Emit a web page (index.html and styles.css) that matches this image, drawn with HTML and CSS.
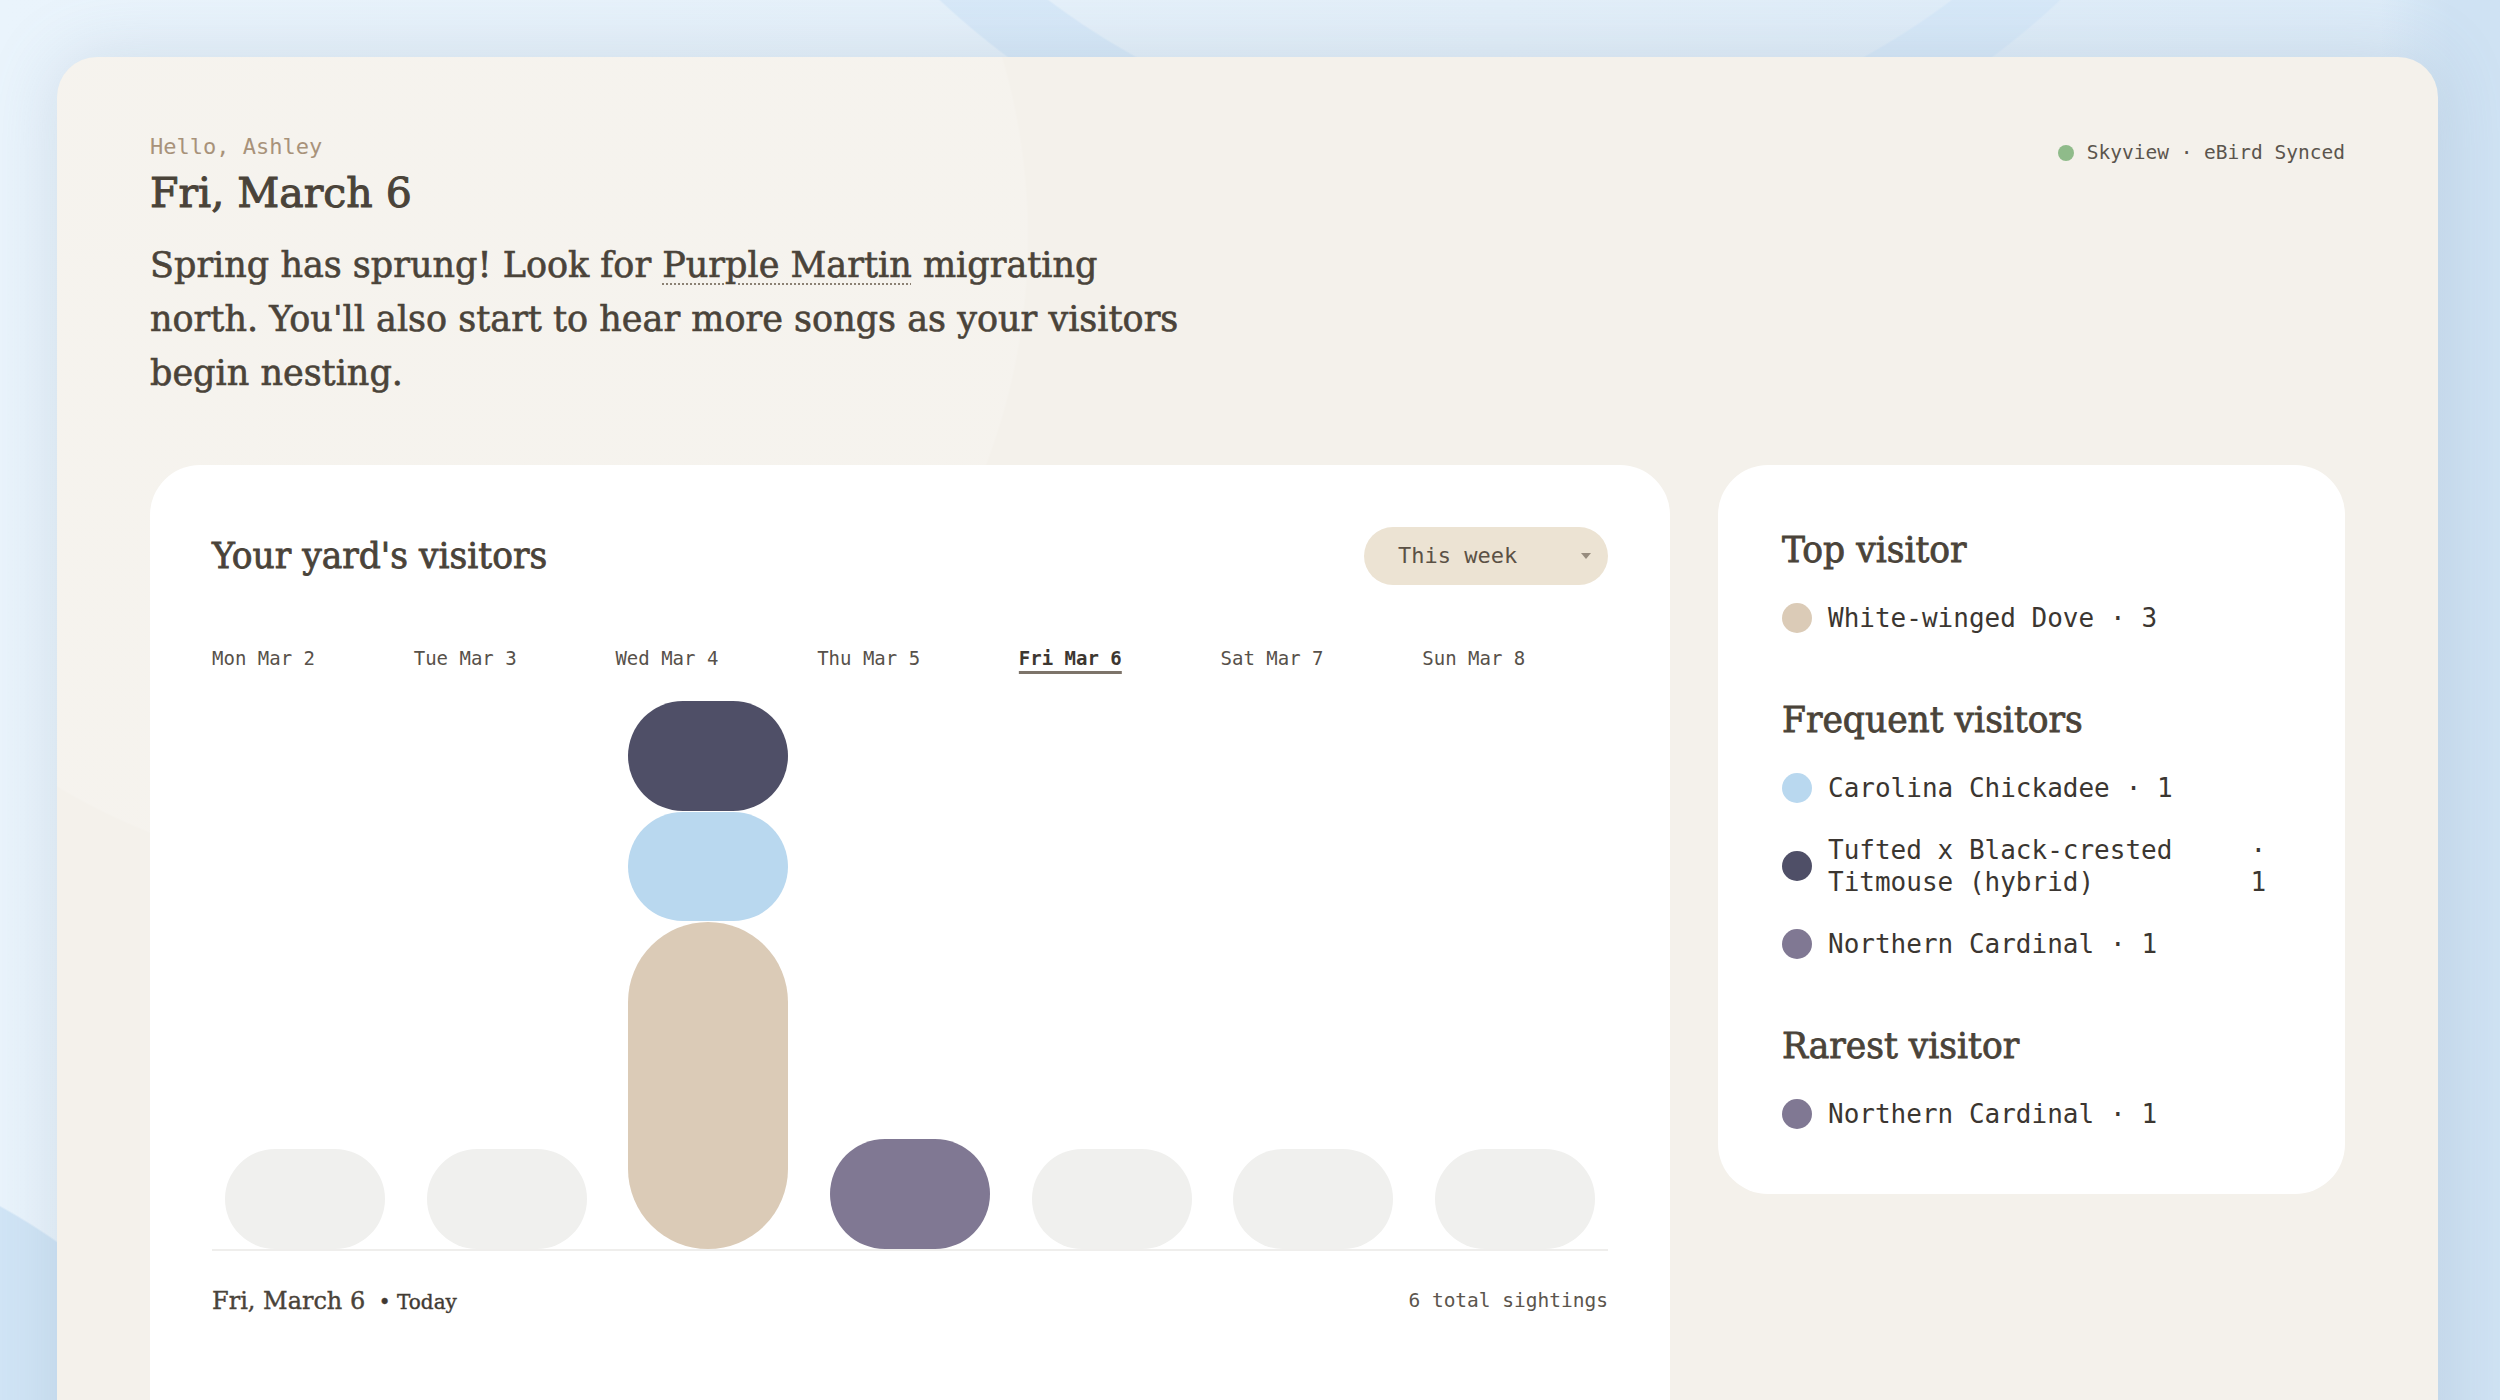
FILE: index.html
```html
<!DOCTYPE html>
<html lang="en">
<head>
<meta charset="utf-8">
<title>Yard visitors</title>
<link rel="stylesheet" href="styles.css">
</head>
<body>
<div class="page">
  <main class="panel">
    <header class="intro">
      <div class="intro-text">
        <p class="hello">Hello, Ashley</p>
        <h1 class="today">Fri, March 6</h1>
        <p class="lede">Spring has sprung! Look for <span class="bird-link">Purple Martin</span> migrating north. You'll also start to hear more songs as your visitors begin nesting.</p>
      </div>
      <div class="sync"><span class="sync-dot"></span>Skyview · eBird Synced</div>
    </header>

    <div class="cards">
      <section class="card chart-card">
        <div class="chart-head">
          <h2 class="card-title">Your yard's visitors</h2>
          <button class="range" type="button">
            <span>This week</span>
            <svg class="caret" width="10" height="6" viewBox="0 0 10 6" aria-hidden="true"><path d="M0 0h10L5 6z" fill="currentColor"/></svg>
          </button>
        </div>

        <div class="day-labels">
          <span class="day">Mon Mar 2</span>
          <span class="day">Tue Mar 3</span>
          <span class="day">Wed Mar 4</span>
          <span class="day">Thu Mar 5</span>
          <span class="day is-today">Fri Mar 6</span>
          <span class="day">Sat Mar 7</span>
          <span class="day">Sun Mar 8</span>
        </div>

        <div class="bars">
          <div class="stack"><div class="seg seg-empty"></div></div>
          <div class="stack"><div class="seg seg-empty"></div></div>
          <div class="stack">
            <div class="seg seg-titmouse" style="height:110px"></div>
            <div class="seg seg-chickadee" style="height:109px"></div>
            <div class="seg seg-dove" style="height:327px"></div>
          </div>
          <div class="stack"><div class="seg seg-cardinal" style="height:110px"></div></div>
          <div class="stack"><div class="seg seg-empty"></div></div>
          <div class="stack"><div class="seg seg-empty"></div></div>
          <div class="stack"><div class="seg seg-empty"></div></div>
        </div>

        <div class="chart-foot">
          <div class="foot-date">Fri, March 6 <span class="foot-today">• Today</span></div>
          <div class="foot-total">6 total sightings</div>
        </div>
      </section>

      <aside class="card summary">
        <section class="group">
          <h3 class="group-title">Top visitor</h3>
          <ul class="birds">
            <li class="bird"><span class="dot dot-dove"></span><span class="bird-name">White-winged Dove</span><span class="bird-count">· 3</span></li>
          </ul>
        </section>
        <section class="group">
          <h3 class="group-title">Frequent visitors</h3>
          <ul class="birds">
            <li class="bird"><span class="dot dot-chickadee"></span><span class="bird-name">Carolina Chickadee</span><span class="bird-count">· 1</span></li>
            <li class="bird"><span class="dot dot-titmouse"></span><span class="bird-name">Tufted x Black-crested Titmouse (hybrid)</span><span class="bird-count">· 1</span></li>
            <li class="bird"><span class="dot dot-cardinal"></span><span class="bird-name">Northern Cardinal</span><span class="bird-count">· 1</span></li>
          </ul>
        </section>
        <section class="group">
          <h3 class="group-title">Rarest visitor</h3>
          <ul class="birds">
            <li class="bird"><span class="dot dot-cardinal"></span><span class="bird-name">Northern Cardinal</span><span class="bird-count">· 1</span></li>
          </ul>
        </section>
      </aside>
    </div>
  </main>
</div>
</body>
</html>
```

FILE: styles.css
```css
* { box-sizing: border-box; }

html, body {
  margin: 0;
  padding: 0;
}

body {
  background-color: #e3eff9;
  background-image:
    linear-gradient(90deg, rgba(208, 226, 243, 0) 2380px, #cfe2f3 2450px),
    radial-gradient(circle at 1500px -600px, transparent 0 750px, rgba(214, 232, 248, 0.9) 752px 820px, transparent 822px),
    radial-gradient(circle at -300px 1750px, #d1e5f6 0 620px, transparent 622px),
    linear-gradient(90deg, #eaf4fc 0%, #e3eff9 60%, #dcebf8 100%);
  font-family: "DejaVu Serif", serif;
  color: #4a4339;
}

.page {
  height: 100vh;
  overflow: hidden;
  padding: 57px 62px 0 57px;
}

.panel {
  background-color: #f4f1eb;
  background-image:
    radial-gradient(circle at 330px 180px, rgba(255, 255, 255, 0.14) 0 640px, transparent 642px);
  border-radius: 40px;
  padding: 73px 93px 0;
  min-height: 1600px;
  box-shadow: 0 0 70px rgba(110, 135, 165, 0.22);
}

/* intro */
.intro {
  display: flex;
  justify-content: space-between;
  align-items: flex-start;
}

.hello {
  margin: 0;
  font: 22px/33px "DejaVu Sans Mono", monospace;
  color: #a8927a;
}

.today {
  margin: 6px 0 0;
  font: 400 41px/49px "DejaVu Serif", serif;
  color: #4a4339;
  -webkit-text-stroke: 1px #4a4339;
}

.lede {
  margin: 20px 0 0;
  max-width: 1045px;
  font: 35px/54px "DejaVu Serif", serif;
  color: #4a4339;
  -webkit-text-stroke: 0.6px #4a4339;
}

.bird-link {
  text-decoration: underline dotted #8b8174;
  text-decoration-thickness: 2px;
  text-underline-offset: 6px;
}

.sync {
  margin-top: 8px;
  display: flex;
  align-items: center;
  gap: 13px;
  font: 19.5px/29px "DejaVu Sans Mono", monospace;
  color: #5b554d;
}

.sync-dot {
  width: 16px;
  height: 16px;
  border-radius: 50%;
  background: #8fbb8a;
}

/* cards */
.cards {
  display: grid;
  grid-template-columns: 1fr 627px;
  gap: 48px;
  margin-top: 65px;
  align-items: start;
}

.card {
  background: #ffffff;
  border-radius: 50px;
}

.chart-card {
  padding: 62px 62px 200px;
}

.chart-head {
  display: flex;
  justify-content: space-between;
  align-items: center;
  height: 58px;
}

.card-title,
.group-title {
  margin: 0;
  font: 400 34.5px/42px "DejaVu Serif", serif;
  color: #4a4339;
  -webkit-text-stroke: 0.8px #4a4339;
}

.range {
  width: 244px;
  height: 58px;
  border: 0;
  border-radius: 29px;
  background: #ece3d3;
  display: flex;
  align-items: center;
  justify-content: space-between;
  padding: 0 17px 0 34px;
  font: 22px/1 "DejaVu Sans Mono", monospace;
  color: #5b5145;
}

.caret {
  color: #978c7e;
}

.day-labels,
.bars {
  display: grid;
  grid-template-columns: repeat(7, 1fr);
  column-gap: 16px;
}

.day-labels {
  margin-top: 61px;
  font: 19px/24px "DejaVu Sans Mono", monospace;
  color: #57514a;
}

.day.is-today {
  font-weight: bold;
  color: #3d3731;
  text-decoration: underline solid #7d746a;
  text-decoration-thickness: 3px;
  text-underline-offset: 6px;
}

.bars {
  height: 550px;
  margin-top: 31px;
  border-bottom: 2px solid #efeeec;
}

.stack {
  display: flex;
  flex-direction: column;
  justify-content: flex-end;
  align-items: center;
  gap: 1px;
}

.seg {
  width: 160px;
  border-radius: 999px;
}

.seg-empty { height: 100px; background: #f0f0ee; }
.seg-titmouse { background: #4f4f67; }
.seg-chickadee { background: #b9d8ef; }
.seg-dove { background: #dbcbb7; }
.seg-cardinal { background: #807893; }

.chart-foot {
  display: flex;
  justify-content: space-between;
  align-items: center;
  height: 32px;
  margin-top: 34px;
}

.foot-date {
  font: 24px/32px "DejaVu Serif", serif;
  color: #4a4339;
  -webkit-text-stroke: 0.4px #4a4339;
}

.foot-today {
  margin-left: 6px;
  font-size: 20px;
  color: #3f3932;
}

.foot-total {
  font: 19.5px/32px "DejaVu Sans Mono", monospace;
  color: #5b554d;
}

/* summary */
.summary {
  padding: 64px;
}

.group + .group {
  margin-top: 65px;
}

.group-title {
  margin-bottom: 31px;
}

.birds {
  list-style: none;
  margin: 0;
  padding: 0;
  display: flex;
  flex-direction: column;
  gap: 30px;
}

.bird {
  display: flex;
  align-items: center;
  gap: 16px;
  font: 26px/32px "DejaVu Sans Mono", monospace;
  color: #3b3631;
}

.dot {
  flex: none;
  width: 30px;
  height: 30px;
  border-radius: 50%;
}

.dot-dove { background: #dbcbb7; }
.dot-chickadee { background: #b9d8ef; }
.dot-titmouse { background: #4f4f67; }
.dot-cardinal { background: #807893; }
```
